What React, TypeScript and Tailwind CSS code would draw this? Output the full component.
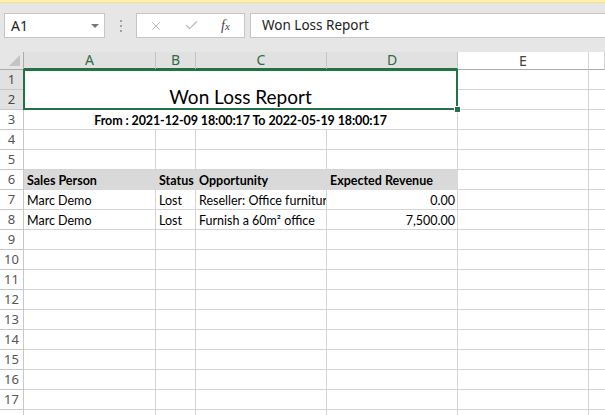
import { X, Check } from "lucide-react";

const cols = ["A", "B", "C", "D", "E", ""];
const cellFont = { fontFamily: "Lato, 'Open Sans', sans-serif" };

type Row = { n: number; cells?: string[]; kind?: "head" | "data" };

const rows: Row[] = [
	{ n: 4 },
	{ n: 5 },
	{ n: 6, kind: "head", cells: ["Sales Person", "Status", "Opportunity", "Expected Revenue"] },
	{ n: 7, kind: "data", cells: ["Marc Demo", "Lost", "Reseller: Office furniture", "0.00"] },
	{ n: 8, kind: "data", cells: ["Marc Demo", "Lost", "Furnish a 60m² office", "7,500.00"] },
	...Array.from({ length: 10 }, (_, i) => ({ n: 9 + i })),
];

function RowHead({ n, selected }: { n: number; selected?: boolean }) {
	return (
		<div
			className={`flex items-center justify-center border-r border-b border-[#c8c8c8] text-[13px] leading-none ${
				selected ? "bg-[#e1e1e1] text-[#4a4a4a]" : "bg-white text-[#555]"
			}`}>
			{n}
		</div>
	);
}

export default function App() {
	return (
		<div
			className="w-[605px] h-[415px] overflow-hidden bg-white"
			style={{ fontFamily: "'Noto Sans', 'Open Sans', sans-serif" }}>
			{/* formula bar */}
			<div className="h-[3px] bg-[#fdf1ae] border-b border-[#f3e48a]" />
			<div className="h-[49px] bg-[#e6e6e6] flex items-start pt-[10px]">
				<div className="ml-[4px] w-[101px] h-[25px] bg-white border border-[#c6c6c6] flex items-center justify-between pl-[6px] pr-[5px]">
					<span className="text-[14px] text-[#222]">A1</span>
					<span className="w-0 h-0 border-l-[4px] border-r-[4px] border-t-[4px] border-l-transparent border-r-transparent border-t-[#777]" />
				</div>
				<div className="w-[31px] h-[25px] flex flex-col items-center justify-center gap-[3px]">
					<span className="w-[2px] h-[2px] bg-[#a0a0a0]" />
					<span className="w-[2px] h-[2px] bg-[#a0a0a0]" />
					<span className="w-[2px] h-[2px] bg-[#a0a0a0]" />
				</div>
				<div className="w-[109px] h-[25px] bg-white border border-[#c6c6c6] flex items-center pl-[12px]">
					<X size={14} strokeWidth={1.5} className="text-[#b0b0b0]" />
					<Check size={15} strokeWidth={2} className="text-[#bdbdbd] ml-[21px]" />
					<span
						className="ml-[22px] text-[14px] italic text-[#444]"
						style={{ fontFamily: "'Liberation Serif', serif" }}>
						f<span className="text-[11px]">x</span>
					</span>
				</div>
				<div className="ml-[5px] flex-1 h-[25px] bg-white border border-[#c6c6c6] border-r-0 flex items-center pl-[11px]">
					<span className="text-[13.5px] text-[#222]">Won Loss Report</span>
				</div>
			</div>

			{/* sheet */}
			<div className="grid grid-cols-[24px_132px_40px_131px_131px_131px_1fr] grid-rows-[18px] auto-rows-[20px] text-[#000]">
				{/* column header */}
				<div className="relative bg-[#e6e6e6] border-r border-b border-[#ababab]">
					<span className="absolute right-[3px] bottom-[3px] w-0 h-0 border-l-[11px] border-l-transparent border-b-[11px] border-b-[#c4c4c4]" />
				</div>
				{cols.map((c, i) => {
					const sel = i < 4;
					return (
						<div
							key={i}
							className={`flex items-center justify-center text-[14px] leading-none border-r ${
								sel
									? "bg-[#e1e1e1] text-[#2e6b47] border-r-[#c4c4c4] border-b-2 border-b-[#217346]"
									: "bg-white text-[#444] border-r-[#d4d4d4] border-b border-b-[#ababab]"
							}`}>
							{c}
						</div>
					);
				})}

				{/* rows 1-2 with merged title */}
				<RowHead n={1} selected />
				<div
					className="relative col-span-4 row-span-2 flex items-end justify-center border-r border-b border-[#d4d4d4]"
					style={cellFont}>
					<span className="text-[19px] leading-none pb-[3px]">Won Loss Report</span>
					<div className="absolute -left-px -top-px -right-px -bottom-px border-2 border-[#217346]" />
					<div className="absolute -right-[4px] -bottom-[4px] w-[7px] h-[7px] bg-[#217346] border border-white" />
				</div>
				<div className="border-r border-b border-[#d4d4d4]" />
				<div className="border-b border-[#d4d4d4]" />
				<RowHead n={2} selected />
				<div className="border-r border-b border-[#d4d4d4]" />
				<div className="border-b border-[#d4d4d4]" />

				{/* row 3 merged subtitle */}
				<RowHead n={3} />
				<div
					className="col-span-4 flex items-end pb-[2px] justify-center text-[12.5px] leading-none font-bold tracking-[-0.1px] border-r border-b border-[#d4d4d4]"
					style={cellFont}>
					From : 2021-12-09 18:00:17 To 2022-05-19 18:00:17
				</div>
				<div className="border-r border-b border-[#d4d4d4]" />
				<div className="border-b border-[#d4d4d4]" />

				{rows.map((r) => (
					<div key={r.n} className="contents">
						<RowHead n={r.n} />
						{[0, 1, 2, 3, 4, 5].map((i) => {
							const text = r.cells?.[i];
							const isHead = r.kind === "head" && i < 4;
							const right = r.kind === "data" && i === 3;
							return (
								<div
									key={i}
									className={`overflow-hidden whitespace-nowrap flex items-end pb-[2px] text-[12.5px] leading-none border-b ${
										i < 5 ? "border-r" : ""
									} ${
										isHead
											? "bg-[#d9d9d9] border-[#d9d9d9] font-bold"
											: "border-[#d4d4d4]"
									} ${right ? "justify-end pr-[2px]" : "pl-[3px]"}`}
									style={cellFont}>
									{text}
								</div>
							);
						})}
					</div>
				))}
			</div>
		</div>
	);
}
